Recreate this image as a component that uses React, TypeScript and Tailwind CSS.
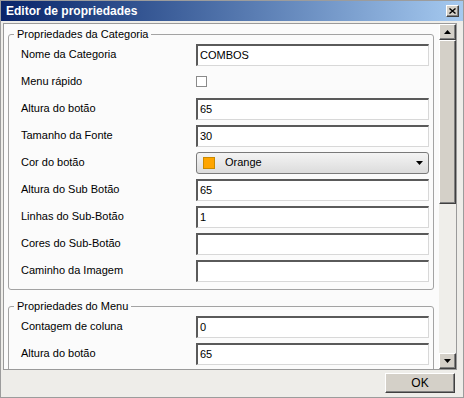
import React from 'react';

const font = { fontFamily: '"Liberation Sans", Arial, sans-serif' };

function TextBox({ value = '' }: { value?: string }) {
  return (
    <div className="h-[22px] w-[233px] border-t-2 border-l-2 border-r border-b border-t-[#5a5a5a] border-l-[#5a5a5a] border-r-[#d8d8d8] border-b-[#d8d8d8] bg-white pl-[2px] flex items-center text-[11px] text-black">
      {value}
    </div>
  );
}

function CheckBox() {
  return <div className="h-[11px] w-[11px] border border-[#8a8a8a] bg-white" />;
}

function ColorCombo() {
  return (
    <div className="h-[22px] w-[233px] rounded-[3px] border border-[#7a7a7a] bg-gradient-to-b from-[#f4f4f4] to-[#dcdcdc] flex items-center pl-[6px] pr-[5px] text-[11px] text-black">
      <span className="h-[12px] w-[12px] border border-[#c98a00] bg-[#ffa500]" />
      <span className="ml-[10px] flex-1">Orange</span>
      <svg width="7" height="4" viewBox="0 0 7 4">
        <path d="M0 0h7L3.5 4z" fill="#000" />
      </svg>
    </div>
  );
}

type Row = { label: string; kind: 'text' | 'check' | 'combo'; value?: string };

const categoria: Row[] = [
  { label: 'Nome da Categoria', kind: 'text', value: 'COMBOS' },
  { label: 'Menu rápido', kind: 'check' },
  { label: 'Altura do botão', kind: 'text', value: '65' },
  { label: 'Tamanho da Fonte', kind: 'text', value: '30' },
  { label: 'Cor do botão', kind: 'combo' },
  { label: 'Altura do Sub Botão', kind: 'text', value: '65' },
  { label: 'Linhas do Sub-Botão', kind: 'text', value: '1' },
  { label: 'Cores do Sub-Botão', kind: 'text' },
  { label: 'Caminho da Imagem', kind: 'text' },
];

const menu: Row[] = [
  { label: 'Contagem de coluna', kind: 'text', value: '0' },
  { label: 'Altura do botão', kind: 'text', value: '65' },
];

function Group({ title, rows, className = '' }: { title: string; rows: Row[]; className?: string }) {
  return (
    <fieldset className={`border border-[#a3a3a3] rounded-[3px] ${className}`}>
      <legend className="ml-[5px] px-[3px] text-[11px] leading-[14px] text-black">{title}</legend>
      <div className="pl-[12px] pr-[2px] pb-[5px]">
        {rows.map((r, i) => (
          <div key={i} className="h-[27px] grid grid-cols-[175px_233px] items-center">
            <span className="text-[11px] text-black">{r.label}</span>
            {r.kind === 'text' && <TextBox value={r.value} />}
            {r.kind === 'check' && <CheckBox />}
            {r.kind === 'combo' && <ColorCombo />}
          </div>
        ))}
      </div>
    </fieldset>
  );
}

const raised =
  'bg-[#d4d0c8] border border-t-white border-l-white border-r-[#404040] border-b-[#404040] shadow-[inset_-1px_-1px_0_#808080]';

function ScrollBar() {
  return (
    <div className="w-[17px] flex flex-col bg-[#efeeea]">
      <div className={`h-[16px] flex items-center justify-center ${raised}`}>
        <svg width="7" height="4" viewBox="0 0 7 4">
          <path d="M3.5 0L7 4H0z" fill="#000" />
        </svg>
      </div>
      <div className={`h-[164px] ${raised}`} />
      <div className="flex-1" />
      <div className={`h-[16px] flex items-center justify-center ${raised}`}>
        <svg width="7" height="4" viewBox="0 0 7 4">
          <path d="M0 0h7L3.5 4z" fill="#000" />
        </svg>
      </div>
    </div>
  );
}

export default function App() {
  return (
    <div className="w-[464px] h-[398px] bg-[#eeede9] border border-[#9c9c9c] flex flex-col overflow-hidden" style={font}>
      <div className="h-[20px] bg-gradient-to-r from-[#0a246a] to-[#a6caf0] flex items-center pl-[5px] pr-[4px]">
        <span className="flex-1 text-[12px] font-bold text-white">Editor de propriedades</span>
        <div className={`h-[12px] w-[13px] flex items-center justify-center ${raised}`}>
          <svg width="7" height="6" viewBox="0 0 7 6">
            <path d="M0.5 0.5L6.5 5.5M6.5 0.5L0.5 5.5" stroke="#000" strokeWidth="1.4" />
          </svg>
        </div>
      </div>

      <div className="mt-[2px] ml-[2px] mr-[6px] h-[347px] border border-[#9a9a9a] flex bg-[#fbfbfb]">
        <div className="flex-1 overflow-hidden pl-[4px] pr-[5px] pt-[3px]">
          <Group title="Propriedades da Categoria" rows={categoria} />
          <Group title="Propriedades do Menu" rows={menu} className="mt-[9px]" />
        </div>
        <ScrollBar />
      </div>

      <div className="mt-[3px] flex justify-end pr-[8px]">
        <button className={`h-[20px] w-[70px] text-[12px] text-black ${raised}`}>OK</button>
      </div>
    </div>
  );
}
